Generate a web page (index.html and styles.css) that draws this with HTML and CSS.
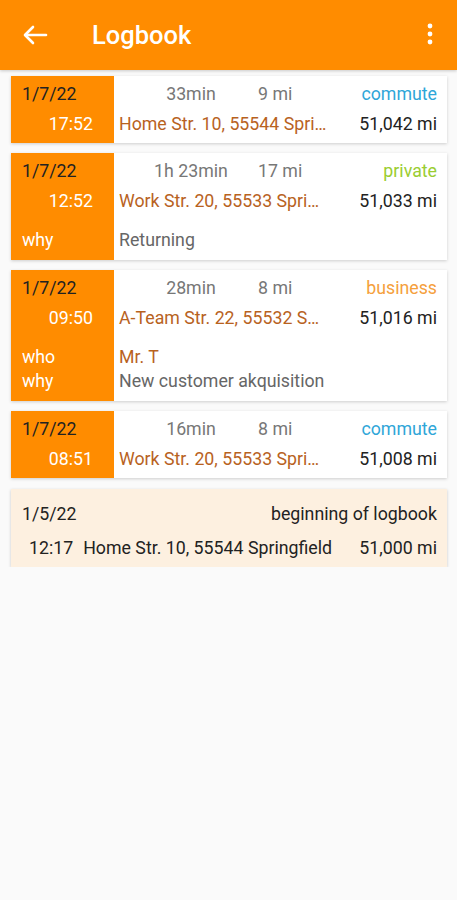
FILE: index.html
```html
<!DOCTYPE html>
<html>
	<head>
		<meta charset="utf-8">
		<title>Logbook</title>
		<link rel="stylesheet" href="styles.css">
	</head>
	<body>
		<div class="bar">
			<svg class="back" width="26" height="22" viewBox="0 0 26 22">
				<polyline points="10,3 2,11 10,19" fill="none" stroke="#fff" stroke-width="2.6" stroke-linecap="round" stroke-linejoin="round"/>
				<line x1="2.5" y1="11" x2="23" y2="11" stroke="#fff" stroke-width="2.6" stroke-linecap="round"/>
			</svg>
			<h1>Logbook</h1>
			<svg class="menu" width="8" height="24" viewBox="0 0 8 24">
				<circle cx="4" cy="4" r="2.4" fill="#fff"/>
				<circle cx="4" cy="12" r="2.4" fill="#fff"/>
				<circle cx="4" cy="20" r="2.4" fill="#fff"/>
			</svg>
		</div>

		<div class="list">
			<div class="trip">
				<div class="side">
					<p class="date">1/7/22</p>
					<p class="time">17:52</p>
				</div>
				<div class="info">
					<p class="row">
						<span class="dur">33min</span>
						<span class="dist">9 mi</span>
						<span class="cat commute">commute</span>
					</p>
					<p class="row">
						<span class="addr">Home Str. 10, 55544 Spri…</span>
						<span class="odo">51,042 mi</span>
					</p>
				</div>
			</div>

			<div class="trip">
				<div class="side">
					<p class="date">1/7/22</p>
					<p class="time">12:52</p>
					<p class="label">why</p>
				</div>
				<div class="info">
					<p class="row">
						<span class="dur">1h 23min</span>
						<span class="dist">17 mi</span>
						<span class="cat private">private</span>
					</p>
					<p class="row">
						<span class="addr">Work Str. 20, 55533 Spri…</span>
						<span class="odo">51,033 mi</span>
					</p>
					<p class="note">Returning</p>
				</div>
			</div>

			<div class="trip">
				<div class="side">
					<p class="date">1/7/22</p>
					<p class="time">09:50</p>
					<p class="label">who</p>
					<p class="label next">why</p>
				</div>
				<div class="info">
					<p class="row">
						<span class="dur">28min</span>
						<span class="dist">8 mi</span>
						<span class="cat business">business</span>
					</p>
					<p class="row">
						<span class="addr">A-Team Str. 22, 55532 S…</span>
						<span class="odo">51,016 mi</span>
					</p>
					<p class="note who">Mr. T</p>
					<p class="note next">New customer akquisition</p>
				</div>
			</div>

			<div class="trip">
				<div class="side">
					<p class="date">1/7/22</p>
					<p class="time">08:51</p>
				</div>
				<div class="info">
					<p class="row">
						<span class="dur">16min</span>
						<span class="dist">8 mi</span>
						<span class="cat commute">commute</span>
					</p>
					<p class="row">
						<span class="addr">Work Str. 20, 55533 Spri…</span>
						<span class="odo">51,008 mi</span>
					</p>
				</div>
			</div>

			<div class="start">
				<p class="row">
					<span>1/5/22</span>
					<span>beginning of logbook</span>
				</p>
				<p class="row">
					<span class="stime">12:17</span>
					<span class="saddr">Home Str. 10, 55544 Springfield</span>
					<span>51,000 mi</span>
				</p>
			</div>
		</div>
	</body>
</html>
```

FILE: styles.css
```css
* {
	margin: 0;
	padding: 0;
	box-sizing: border-box;
}

body {
	background-color: #fafafa;
	font-family: Roboto, "Liberation Sans", sans-serif;
	font-size: 17.75px;
	color: #222;
}

/* top bar */
.bar {
	height: 70px;
	background-color: #ff8c00;
	display: flex;
	align-items: center;
	padding-left: 23px;
	padding-right: 23px;
	box-shadow: 0 1px 3px rgba(0, 0, 0, .2);
}

.bar .back {
	display: block;
	margin-top: -1px;
}

.bar h1 {
	flex: 1;
	margin-left: 43px;
	font-size: 25.5px;
	font-weight: 500;
	color: white;
}

.bar .menu {
	display: block;
	margin-top: -2px;
}

/* list */
.list {
	padding: 6px 10px 0 11px;
	display: flex;
	flex-direction: column;
	gap: 10px;
}

.trip {
	display: flex;
	background-color: white;
	box-shadow: 0 1px 3px rgba(0, 0, 0, .18);
}

.side {
	width: 103px;
	background-color: #ff8c00;
	padding: 3px 21px 4px 11px;
	line-height: 30px;
}

.side .date {
	color: #222;
}

.side .time {
	color: white;
	text-align: right;
}

.side .label {
	color: white;
	line-height: 24px;
	margin-top: 12px;
}

.side .label.next {
	margin-top: 0;
}

.info {
	flex: 1;
	padding: 3px 10px 4px 5px;
	line-height: 30px;
}

.row {
	display: flex;
	white-space: nowrap;
}

.dur {
	width: 134px;
	margin-left: 5px;
	text-align: center;
	color: #777;
}

.dist {
	flex: 1;
	color: #777;
}

.commute {
	color: #2fa6d8;
}

.private {
	color: #9acd32;
}

.business {
	color: #f5a03c;
}

.addr {
	flex: 1;
	color: #b8621e;
}

.odo {
	color: #222;
}

.note {
	line-height: 24px;
	margin-top: 12px;
	color: #666;
}

.note:last-child {
	margin-bottom: 4px;
}

.note.who {
	color: #b8621e;
}

.note.next {
	margin-top: 0;
}

/* first entry */
.start {
	margin-top: 1px;
	background-color: #fdf0e0;
	padding: 10px 10px 4px 11px;
	line-height: 30px;
	display: flex;
	flex-direction: column;
	gap: 4px;
	box-shadow: 0 1px 3px rgba(0, 0, 0, .2);
}

.start .row {
	justify-content: space-between;
}

.start .stime {
	margin-left: 7px;
}

.start .saddr {
	flex: 1;
	margin-left: 10px;
}
```
